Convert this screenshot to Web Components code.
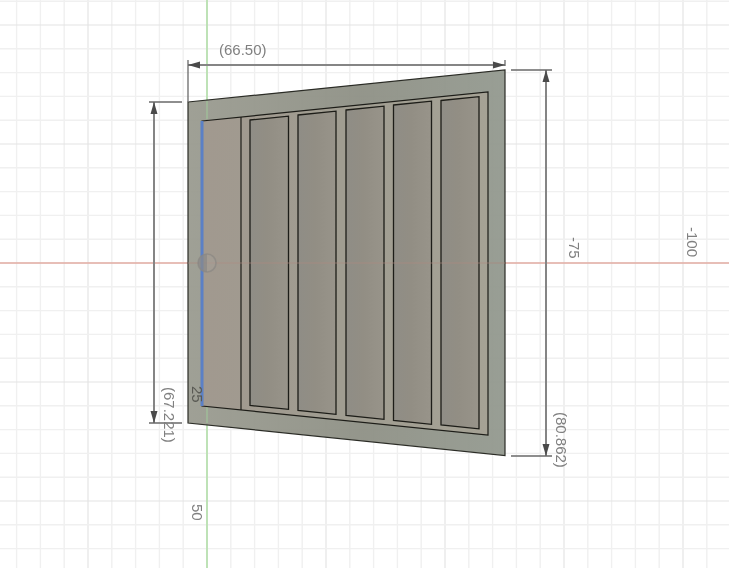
<!DOCTYPE html>
<html>
<head>
<meta charset="utf-8">
<title>Sketch</title>
<style>
  html, body { margin: 0; padding: 0; background: #fff; }
</style>
</head>
<body>
<cad-viewport>
  <cad-grid></cad-grid>
  <cad-part></cad-part>
  <cad-dimension d="M188 65H505" ticks="M188 60V102M505 60V66" arrows="188,65,r 505,65,l"></cad-dimension>
  <cad-dimension d="M154 102V423" ticks="M149 102H182M149 423H182" arrows="154,102,d 154,423,u"></cad-dimension>
  <cad-dimension d="M546 70V456" ticks="M511 70H552M511 456H552" arrows="546,70,d 546,456,u"></cad-dimension>
  <cad-label x="219" y="42">(66.50)</cad-label>
  <cad-label x="161" y="387" vertical>(67.221)</cad-label>
  <cad-label x="553" y="412" vertical>(80.862)</cad-label>
  <cad-label x="566" y="237" vertical>-75</cad-label>
  <cad-label x="684" y="227" vertical>-100</cad-label>
  <cad-label x="189" y="504" vertical>50</cad-label>
  <cad-label x="189" y="386" vertical dark>25</cad-label>
</cad-viewport>

<script>
class CadViewport extends HTMLElement {
  connectedCallback() {
    this.attachShadow({ mode: 'open' });
    this.shadowRoot.innerHTML = `
      <style>
        :host {
          display: block;
          position: relative;
          width: 729px;
          height: 568px;
          overflow: hidden;
          background: #fff;
          filter: blur(0.4px);
        }
      </style>
      <slot></slot>
    `;
  }
}

// origin of the sketch plane on screen, and one grid cell
const ORIGIN_X = 207;
const ORIGIN_Y = 263;
const CELL = 23.8;

class CadGrid extends HTMLElement {
  connectedCallback() {
    let lines = '';
    for (let i = -9; i <= 22; i++) {
      const x = (ORIGIN_X + i * CELL).toFixed(1);
      const major = i % 5 === 0;
      lines += `<path d="M${x} 0V568" class="${major ? 'major' : 'minor'}"/>`;
    }
    for (let i = -12; i <= 13; i++) {
      const y = (ORIGIN_Y + i * CELL).toFixed(1);
      const major = i % 5 === 0;
      lines += `<path d="M0 ${y}H729" class="${major ? 'major' : 'minor'}"/>`;
    }
    this.attachShadow({ mode: 'open' });
    this.shadowRoot.innerHTML = `
      <style>
        :host { display: block; position: absolute; inset: 0; }
        svg { display: block; }
        .minor { stroke: #f0f0f0; stroke-width: 1.4; fill: none; }
        .major { stroke: #e4e4e4; stroke-width: 1.2; fill: none; }
      </style>
      <svg width="729" height="568" viewBox="0 0 729 568">
        ${lines}
        <path d="M0 ${ORIGIN_Y}H729" stroke="#e3aca3" stroke-width="1.4"/>
        <path d="M${ORIGIN_X} 0V568" stroke="#b8e0b0" stroke-width="1.8"/>
      </svg>
    `;
  }
}

class CadPart extends HTMLElement {
  connectedCallback() {
    // pocket panels: left, right, y top at left, y bottom at left
    const panels = [
      [250, 288.5, 120, 405.5],
      [298, 336, 115, 410.5],
      [346, 384, 110, 415.5],
      [393.5, 431.5, 105, 420.5],
      [441, 479, 100.5, 425],
    ];
    const slope = 0.101;
    const panelShapes = panels.map(([l, r, t, b]) => {
      const dy = (r - l) * slope;
      return `<polygon points="${l},${t} ${r},${(t - dy).toFixed(1)} ${r},${(b + dy).toFixed(1)} ${l},${b}" fill="url(#panel)" stroke="#1d1d18" stroke-width="1.3"/>`;
    }).join('');

    this.attachShadow({ mode: 'open' });
    this.shadowRoot.innerHTML = `
      <style>
        :host { display: block; position: absolute; inset: 0; }
        svg { display: block; }
      </style>
      <svg width="729" height="568" viewBox="0 0 729 568">
        <defs>
          <linearGradient id="outer" gradientUnits="userSpaceOnUse" x1="188" y1="0" x2="505" y2="0">
            <stop offset="0" stop-color="#9a9b90"/>
            <stop offset="0.55" stop-color="#8e9085"/>
            <stop offset="1" stop-color="#93998f"/>
          </linearGradient>
          <linearGradient id="frame" gradientUnits="userSpaceOnUse" x1="202" y1="0" x2="488" y2="0">
            <stop offset="0" stop-color="#a1998f"/>
            <stop offset="0.5" stop-color="#a09d91"/>
            <stop offset="1" stop-color="#a5a295"/>
          </linearGradient>
          <linearGradient id="panel" x1="0" y1="0" x2="1" y2="0">
            <stop offset="0" stop-color="#8f8d86"/>
            <stop offset="0.45" stop-color="#928e84"/>
            <stop offset="1" stop-color="#98948a"/>
          </linearGradient>
          <clipPath id="left-half"><rect x="198" y="254" width="9" height="18"/></clipPath>
        </defs>
        <polygon points="188,102 505,70 505,455.5 188,423" fill="url(#outer)" fill-opacity="0.95" stroke="#2b2c26" stroke-width="1.2"/>
        <path d="M${ORIGIN_X} 101V119M${ORIGIN_X} 407V423" stroke="#a1bb9a" stroke-width="1.6"/>
        <polygon points="202,121 488,92 488,435 202,406" fill="url(#frame)" stroke="#1d1d18" stroke-width="1.2"/>
        <path d="M241 117V410" stroke="#1d1d18" stroke-width="1.2"/>
        ${panelShapes}
        <path d="M188 ${ORIGIN_Y}H505" stroke="#b08a80" stroke-width="1.2" opacity="0.6"/>
        <path d="M202 121V406" stroke="#5b80c6" stroke-width="3"/>
        <circle cx="${ORIGIN_X}" cy="${ORIGIN_Y}" r="9" fill="#77767a" fill-opacity="0.6" clip-path="url(#left-half)"/>
        <circle cx="${ORIGIN_X}" cy="${ORIGIN_Y}" r="9" fill="#a8a69f" fill-opacity="0.3" stroke="#8a8883" stroke-opacity="0.7" stroke-width="1.6"/>
      </svg>
    `;
  }
}

class CadDimension extends HTMLElement {
  connectedCallback() {
    const heads = {
      r: (x, y) => `${x},${y} ${x + 12},${y - 3.5} ${x + 12},${y + 3.5}`,
      l: (x, y) => `${x},${y} ${x - 12},${y - 3.5} ${x - 12},${y + 3.5}`,
      d: (x, y) => `${x},${y} ${x - 3.5},${y + 12} ${x + 3.5},${y + 12}`,
      u: (x, y) => `${x},${y} ${x - 3.5},${y - 12} ${x + 3.5},${y - 12}`,
    };
    const arrows = this.getAttribute('arrows').split(' ').map((a) => {
      const [x, y, dir] = a.split(',');
      return `<polygon points="${heads[dir](+x, +y)}" fill="#4a4a4a"/>`;
    }).join('');

    this.attachShadow({ mode: 'open' });
    this.shadowRoot.innerHTML = `
      <style>
        :host { display: block; position: absolute; inset: 0; }
        svg { display: block; }
      </style>
      <svg width="729" height="568" viewBox="0 0 729 568">
        <path d="${this.getAttribute('d')}" stroke="#858585" stroke-width="2" fill="none"/>
        <path d="${this.getAttribute('ticks')}" stroke="#6a6a6a" stroke-width="1.3" fill="none"/>
        ${arrows}
      </svg>
    `;
  }
}

class CadLabel extends HTMLElement {
  connectedCallback() {
    this.attachShadow({ mode: 'open' });
    this.shadowRoot.innerHTML = `
      <style>
        :host {
          display: block;
          position: absolute;
          font: 15px/16px "Liberation Sans", Arial, sans-serif;
          color: #808080;
          white-space: nowrap;
        }
        :host([vertical]) { writing-mode: vertical-rl; }
        :host([dark]) { color: #5a5a54; }
      </style>
      <slot></slot>
    `;
    this.style.left = this.getAttribute('x') + 'px';
    this.style.top = this.getAttribute('y') + 'px';
  }
}

customElements.define('cad-viewport', CadViewport);
customElements.define('cad-grid', CadGrid);
customElements.define('cad-part', CadPart);
customElements.define('cad-dimension', CadDimension);
customElements.define('cad-label', CadLabel);
</script>
</body>
</html>
